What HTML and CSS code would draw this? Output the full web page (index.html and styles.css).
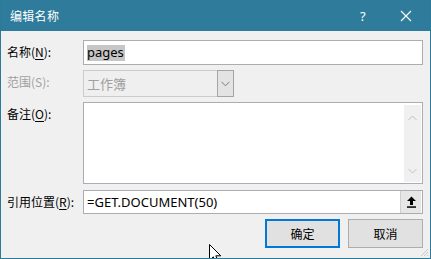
FILE: index.html
```html
<!DOCTYPE html>
<html>
<head>
<meta charset="utf-8">
<link rel="stylesheet" href="styles.css">
</head>
<body>
<div class="win">
  <div class="titlebar">
    <span class="title">编辑名称</span>
    <span class="help">?</span>
    <span class="close"><svg width="12" height="12" viewBox="0 0 12 12"><path d="M1 1L11 11M11 1L1 11" stroke="#fff" stroke-width="1.2" fill="none"/></svg></span>
  </div>
  <div class="body">
    <div class="row r1">
      <label class="lbl">名称(<u>N</u>):</label>
      <div class="field input"><span class="sel">pages</span></div>
    </div>
    <div class="row r2">
      <label class="lbl dis">范围(S):</label>
      <div class="combo">
        <span class="ctext">工作簿</span>
        <span class="drop"><svg width="9" height="6" viewBox="0 0 9 6"><path d="M0.5 0.8L4.5 4.8L8.5 0.8" stroke="#7a7a7a" stroke-width="1" fill="none"/></svg></span>
      </div>
    </div>
    <div class="row r3">
      <label class="lbl">备注(<u>O</u>):</label>
      <div class="field ta">
        <div class="sb">
          <svg width="9" height="6" viewBox="0 0 9 6"><path d="M0.5 5L4.5 1L8.5 5" stroke="#c0c0c0" stroke-width="1" fill="none"/></svg>
          <svg width="9" height="6" viewBox="0 0 9 6"><path d="M0.5 1L4.5 5L8.5 1" stroke="#c0c0c0" stroke-width="1" fill="none"/></svg>
        </div>
      </div>
    </div>
    <div class="row r4">
      <label class="lbl">引用位置(<u>R</u>):</label>
      <div class="field input ref">
        <span class="reftext">=GET.DOCUMENT(50)</span>
        <span class="refbtn"><svg width="11" height="12" viewBox="0 0 11 12"><path d="M5.5 0.5L1 5H4V9H7V5H10Z" fill="#000"/><rect x="1" y="10.3" width="9" height="1.5" fill="#000"/></svg></span>
      </div>
    </div>
    <div class="btns">
      <button class="btn def">确定</button>
      <button class="btn">取消</button>
    </div>
  </div>
  <svg class="grip" width="9" height="9" viewBox="0 0 9 9"><path d="M8 1L1 8M8 4L4 8M8 7L7 8" stroke="#c8c8c8" stroke-width="1"/></svg>
  <svg class="cursor" width="13" height="20" viewBox="0 0 13 20"><path d="M0.5 0.5L0.5 16.5L4.3 12.8L6.8 18.5L9.2 17.5L6.8 11.8L11.8 11.8Z" fill="#fff" stroke="#000" stroke-width="1" stroke-linejoin="miter"/></svg>
</div>
</body>
</html>
```
FILE: styles.css
```css
html, body {
  margin: 0;
  padding: 0;
  background: #f0f0f0;
}
.win {
  position: relative;
  width: 431px;
  height: 259px;
  box-sizing: border-box;
  border: 1px solid #2c7a9a;
  border-top: none;
  background: #f0f0f0;
  overflow: hidden;
  font-family: "Noto Sans CJK SC", "Noto Sans", sans-serif;
  font-size: 12px;
  color: #000;
}
.titlebar {
  height: 31px;
  margin: 0 -1px;
  background: #2e7b9b;
  display: flex;
  align-items: center;
  color: #fff;
}
.title {
  margin-left: 10px;
  font-size: 12px;
  letter-spacing: 0.3px;
  flex: 1;
}
.help {
  font-family: "Noto Sans", sans-serif;
  font-size: 13px;
  width: 14px;
  margin-right: 26px;
}
.close {
  display: flex;
  margin-right: 19px;
}
.body {
  padding: 9px 7px 0 6px;
}
.row {
  display: grid;
  grid-template-columns: 76px 340px;
}
.lbl {
  line-height: 17px;
  padding-top: 3px;
  white-space: nowrap;
}
.lbl u {
  text-decoration-thickness: 1px;
  text-underline-offset: 2px;
}
.lbl.dis {
  color: #a0a0a0;
}
.field {
  box-sizing: border-box;
  background: #fff;
  border: 1px solid #abadb3;
}
.input {
  display: flex;
  align-items: center;
  padding-left: 3px;
  font-family: "Noto Sans", sans-serif;
  font-size: 13px;
}
.r1 { margin-bottom: 5px; }
.r1 .field { height: 25px; }
.sel {
  background: #c6c6c6;
  line-height: 15px;
  padding: 0 1px 1px 0;
  margin-left: 0;
}
.r2 { margin-bottom: 5px; }
.combo {
  width: 151px;
  height: 27px;
  box-sizing: border-box;
  border: 1px solid #cccccc;
  background: #efefef;
  display: flex;
  align-items: stretch;
}
.ctext {
  flex: 1;
  color: #a0a0a0;
  padding-left: 3px;
  display: flex;
  align-items: center;
  font-size: 13px;
}
.drop {
  width: 17px;
  box-sizing: border-box;
  border: 1px solid #a5a5a5;
  margin: -1px -1px -1px 0;
  background: #e3e3e3;
  display: flex;
  align-items: center;
  justify-content: center;
}
.r3 { margin-bottom: 6px; }
.ta {
  height: 82px;
  display: flex;
  justify-content: flex-end;
  padding: 2px 1px 1px 0;
}
.sb {
  width: 17px;
  background: #f0f0f0;
  display: flex;
  flex-direction: column;
  align-items: center;
  justify-content: space-between;
  padding: 10px 0 8px;
  box-sizing: border-box;
}
.r4 { margin-bottom: 5px; }
.r4 .field { height: 24px; }
.ref {
  padding-right: 1px;
}
.reftext {
  flex: 1;
}
.refbtn {
  width: 20px;
  height: 22px;
  background: #e6e6e6;
  border-left: 1px solid #cfcfcf;
  display: flex;
  align-items: center;
  justify-content: center;
}
.btns {
  display: flex;
  justify-content: flex-end;
  gap: 8px;
}
.btn {
  width: 75px;
  height: 29px;
  box-sizing: border-box;
  border: 1px solid #adadad;
  background: #e1e1e1;
  font-family: "Noto Sans CJK SC", sans-serif;
  font-size: 12px;
  color: #000;
  padding: 0;
  margin: 0;
}
.btn.def {
  border: 2px solid #0078d7;
}
.grip {
  position: absolute;
  right: 1px;
  bottom: 1px;
}
.cursor {
  position: absolute;
  left: 208px;
  top: 244px;
}
```
